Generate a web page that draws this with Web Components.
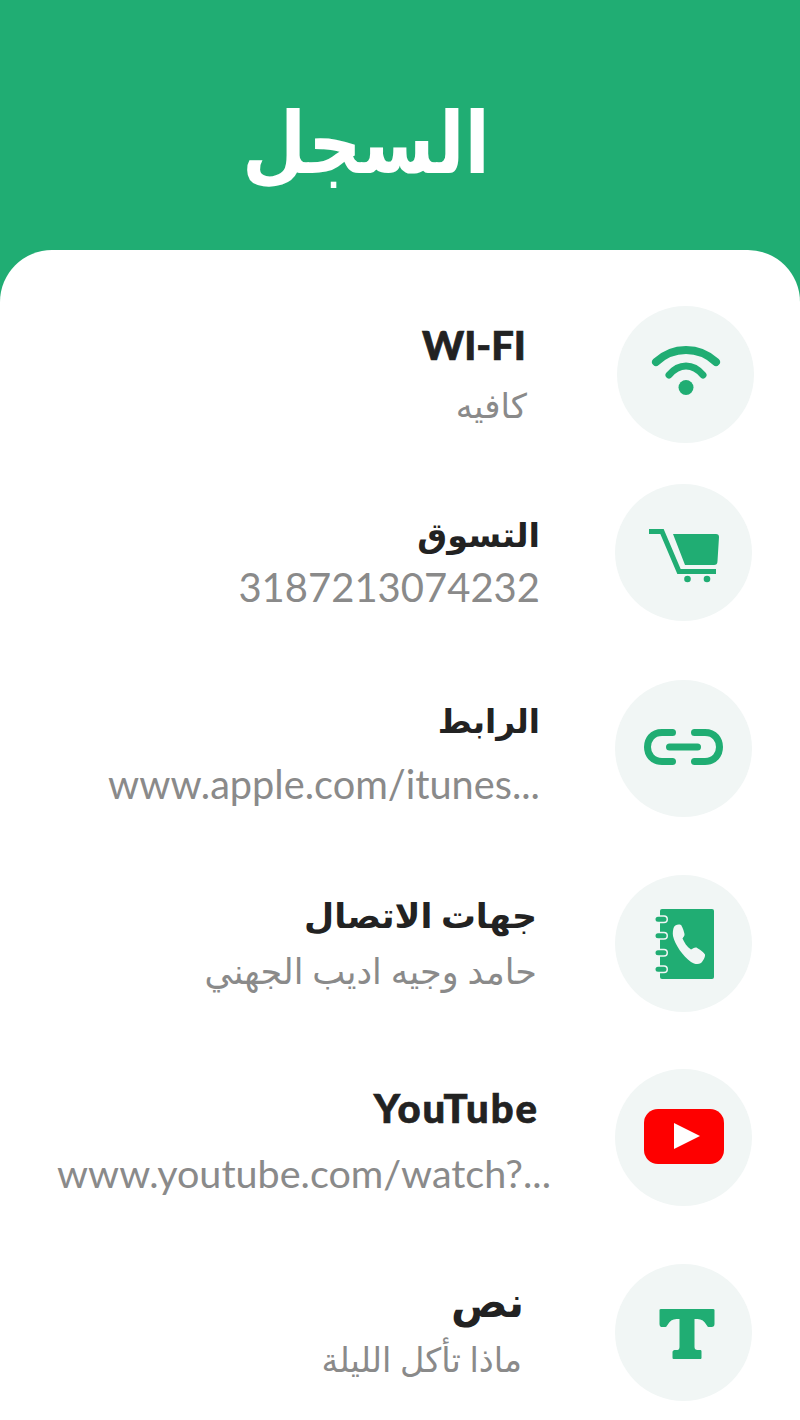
<!DOCTYPE html>
<html lang="ar">
<head>
<meta charset="utf-8">
<title>السجل</title>
<style>
  html, body { margin: 0; height: 100%; }
  body { font-family: Lato, "DejaVu Sans", sans-serif; }
</style>
</head>
<body>
<history-screen>
  <span slot="title">السجل</span>

  <history-row style="--top: 55px; --circle-end: 46px; --text-end: 90px; --title-inset: 1px; --text-top: 16px; --gap: 12px; --title-size: 40px; --title-weight: 900; --title-stroke: 0.7px; --sub-size: 34px">
    <span slot="title">WI-FI</span>
    <span slot="sub">كافيه</span>
    <svg slot="icon" width="70" height="68" viewBox="0 0 70 68" fill="none" stroke="#20ad73" stroke-linecap="round">
      <path d="M5 21C22 5 48 5 65 21" stroke-width="8"/>
      <path d="M18 34C28 22 42 22 52 34" stroke-width="7"/>
      <circle cx="35" cy="46.500" r="7.500" fill="#20ad73" stroke="none"/>
    </svg>
  </history-row>

  <history-row style="--top: 41px; --text-top: 27px; --gap: 5px; --title-size: 33.500px">
    <span slot="title">التسوق</span>
    <span slot="sub">3187213074232</span>
    <svg slot="icon" width="70" height="60" viewBox="0 0 70 60">
      <path d="M0 8.500H13L30 48.500H67" fill="none" stroke="#20ad73" stroke-width="5"/>
      <path d="M24 11H67C69 11 70 12 70 14L68.500 38C68.500 41 67 42 65 42H36Z" fill="#20ad73"/>
      <circle cx="38.500" cy="56" r="3.300" fill="#20ad73"/>
      <circle cx="58" cy="56" r="3.300" fill="#20ad73"/>
    </svg>
  </history-row>

  <history-row style="--top: 59px; --text-top: 18px; --gap: 15px; --title-size: 32.700px; --sub-size: 39.700px">
    <span slot="title">الرابط</span>
    <span slot="sub">www.apple.com/itunes...</span>
    <svg slot="icon" width="80" height="40" viewBox="0 0 80 40" fill="none" stroke="#20ad73" stroke-linecap="round">
      <path d="M28.500 3.500H18C8 3.500 3.500 11 3.500 18C3.500 25 8 32.500 18 32.500H28.500" stroke-width="7"/>
      <path d="M50.500 3.500H61C71 3.500 75.500 11 75.500 18C75.500 25 71 32.500 61 32.500H50.500" stroke-width="7"/>
      <path d="M25.500 18H53.500" stroke-width="7"/>
    </svg>
  </history-row>

  <history-row style="--top: 58px; --text-end: 78px; --text-top: 16.500px; --gap: 7px; --title-size: 34.800px; --sub-size: 35px">
    <span slot="title">جهات الاتصال</span>
    <span slot="sub">حامد وجيه اديب الجهني</span>
    <svg slot="icon" width="60" height="70" viewBox="0 0 60 70">
      <rect x="6" y="0" width="54" height="70" rx="2" fill="#20ad73"/>
      <g fill="#20ad73" stroke="#f1f6f5" stroke-width="1.500">
        <rect x="0.750" y="7" width="12.500" height="6.500" rx="3.250"/>
        <rect x="0.750" y="23.500" width="12.500" height="6.500" rx="3.250"/>
        <rect x="0.750" y="40.500" width="12.500" height="6.500" rx="3.250"/>
        <rect x="0.750" y="57" width="12.500" height="6.500" rx="3.250"/>
      </g>
      <path d="M20 18C21 16 24 15 27 16C28 17 30 22 30.500 25C31 27 29 28 28.500 29.500C30 33 33 38 37 40.500C38.500 40 40.500 38 42.500 38.500C45 40 50 43.500 51 45.500C51.500 48 49 52 47 54C44 56 40 55 37 53C29 47 21 36 19 27C18.500 24 19 20 20 18Z" fill="#f1f6f5"/>
    </svg>
  </history-row>

  <history-row style="--top: 57px; --text-end: 64px; --title-inset: 12px; --text-top: 15.500px; --gap: 17px; --title-size: 40px; --title-weight: 900; --title-spacing: 2px; --title-stroke: 0.7px; --sub-size: 39.500px">
    <span slot="title">YouTube</span>
    <span slot="sub">www.youtube.com/watch?...</span>
    <svg slot="icon" width="80" height="57" viewBox="0 0 80 57">
      <rect x="0" y="0" width="80" height="55" rx="14" fill="#fe0000"/>
      <path d="M30 14L56 27L30 40Z" fill="#fff"/>
    </svg>
  </history-row>

  <history-row style="--top: 58px; --text-end: 93px; --title-inset: -2px; --text-top: 13.500px; --gap: 10px; --title-size: 42px; --sub-size: 33.600px">
    <span slot="title">نص</span>
    <span slot="sub">ماذا تأكل الليلة</span>
    <svg slot="icon" width="64" height="52" viewBox="-6.500 -2 64 52">
      <path d="M1 1C1 0 2 0 3 0H54C55 0 56 0 56 1V15C56 17 55 18 53 18H50C49 18 49 17 48 16C46 12 43 10 39 10H36V38C36 40 37 41 39 41H42C43 41 43 42 43 43V49C43 50 42 50 41 50H15C14 50 14 49 14 48V43C14 42 15 41 16 41H19C20 41 21 40 21 38V10H18C14 10 11 12 9 16C8 17 8 18 7 18H3C2 18 1 17 1 15Z" fill="#20ad73"/>
    </svg>
  </history-row>
</history-screen>

<script>
/**
 * SCREEN
 * */

const screenTemplate = document.createElement("template");

screenTemplate.innerHTML = `
  <style>
    :host {
      display: block;
      min-height: 1420px;
      background: #20ad73;
      overflow: hidden;
    }
    header {
      height: 250px;
      display: flex;
      justify-content: center;
      align-items: center;
      padding: 35px 68px 0 0;
      box-sizing: border-box;
      color: #fff;
      font-family: "DejaVu Sans", sans-serif;
      font-weight: 700;
      font-size: 74px;
      line-height: 1;
    }
    ::slotted(span) {
      display: inline-block;
      transform: scaleY(1.15);
    }
    main {
      height: 1170px;
      box-sizing: border-box;
      background: #fff;
      border-radius: 52px 52px 0 0;
      padding-top: 1px;
    }
  </style>
  <header><slot name="title"></slot></header>
  <main><slot></slot></main>
`;

class HistoryScreen extends HTMLElement {
  constructor() {
    super();
    const shadow = this.attachShadow({ mode: "open" });
    shadow.appendChild(screenTemplate.content.cloneNode(true));
  }
}
customElements.define("history-screen", HistoryScreen);

/**
 * ROW
 * */

const rowTemplate = document.createElement("template");

rowTemplate.innerHTML = `
  <style>
    :host {
      display: flex;
      justify-content: flex-end;
      align-items: flex-start;
      margin-top: var(--top, 58px);
      padding-right: var(--circle-end, 48px);
    }
    .text {
      display: flex;
      flex-direction: column;
      align-items: flex-end;
      margin-top: var(--text-top, 18px);
      margin-right: var(--text-end, 75px);
      white-space: nowrap;
    }
    .title {
      color: #222;
      font-weight: var(--title-weight, 700);
      font-size: var(--title-size, 36px);
      letter-spacing: var(--title-spacing, 0);
      -webkit-text-stroke: var(--title-stroke, 0) #222;
      line-height: 46px;
      margin-right: var(--title-inset, 0);
    }
    .sub {
      color: #8a8a8a;
      font-size: var(--sub-size, 40px);
      line-height: 50px;
      margin-top: var(--gap, 4px);
    }
    .circle {
      flex: none;
      width: 137px;
      height: 137px;
      border-radius: 50%;
      background: #f1f6f5;
      display: flex;
      justify-content: center;
      align-items: center;
    }
  </style>
  <div class="text">
    <div class="title"><slot name="title"></slot></div>
    <div class="sub"><slot name="sub"></slot></div>
  </div>
  <div class="circle"><slot name="icon"></slot></div>
`;

class HistoryRow extends HTMLElement {
  constructor() {
    super();
    const shadow = this.attachShadow({ mode: "open" });
    shadow.appendChild(rowTemplate.content.cloneNode(true));
  }
}
customElements.define("history-row", HistoryRow);
</script>
</body>
</html>
